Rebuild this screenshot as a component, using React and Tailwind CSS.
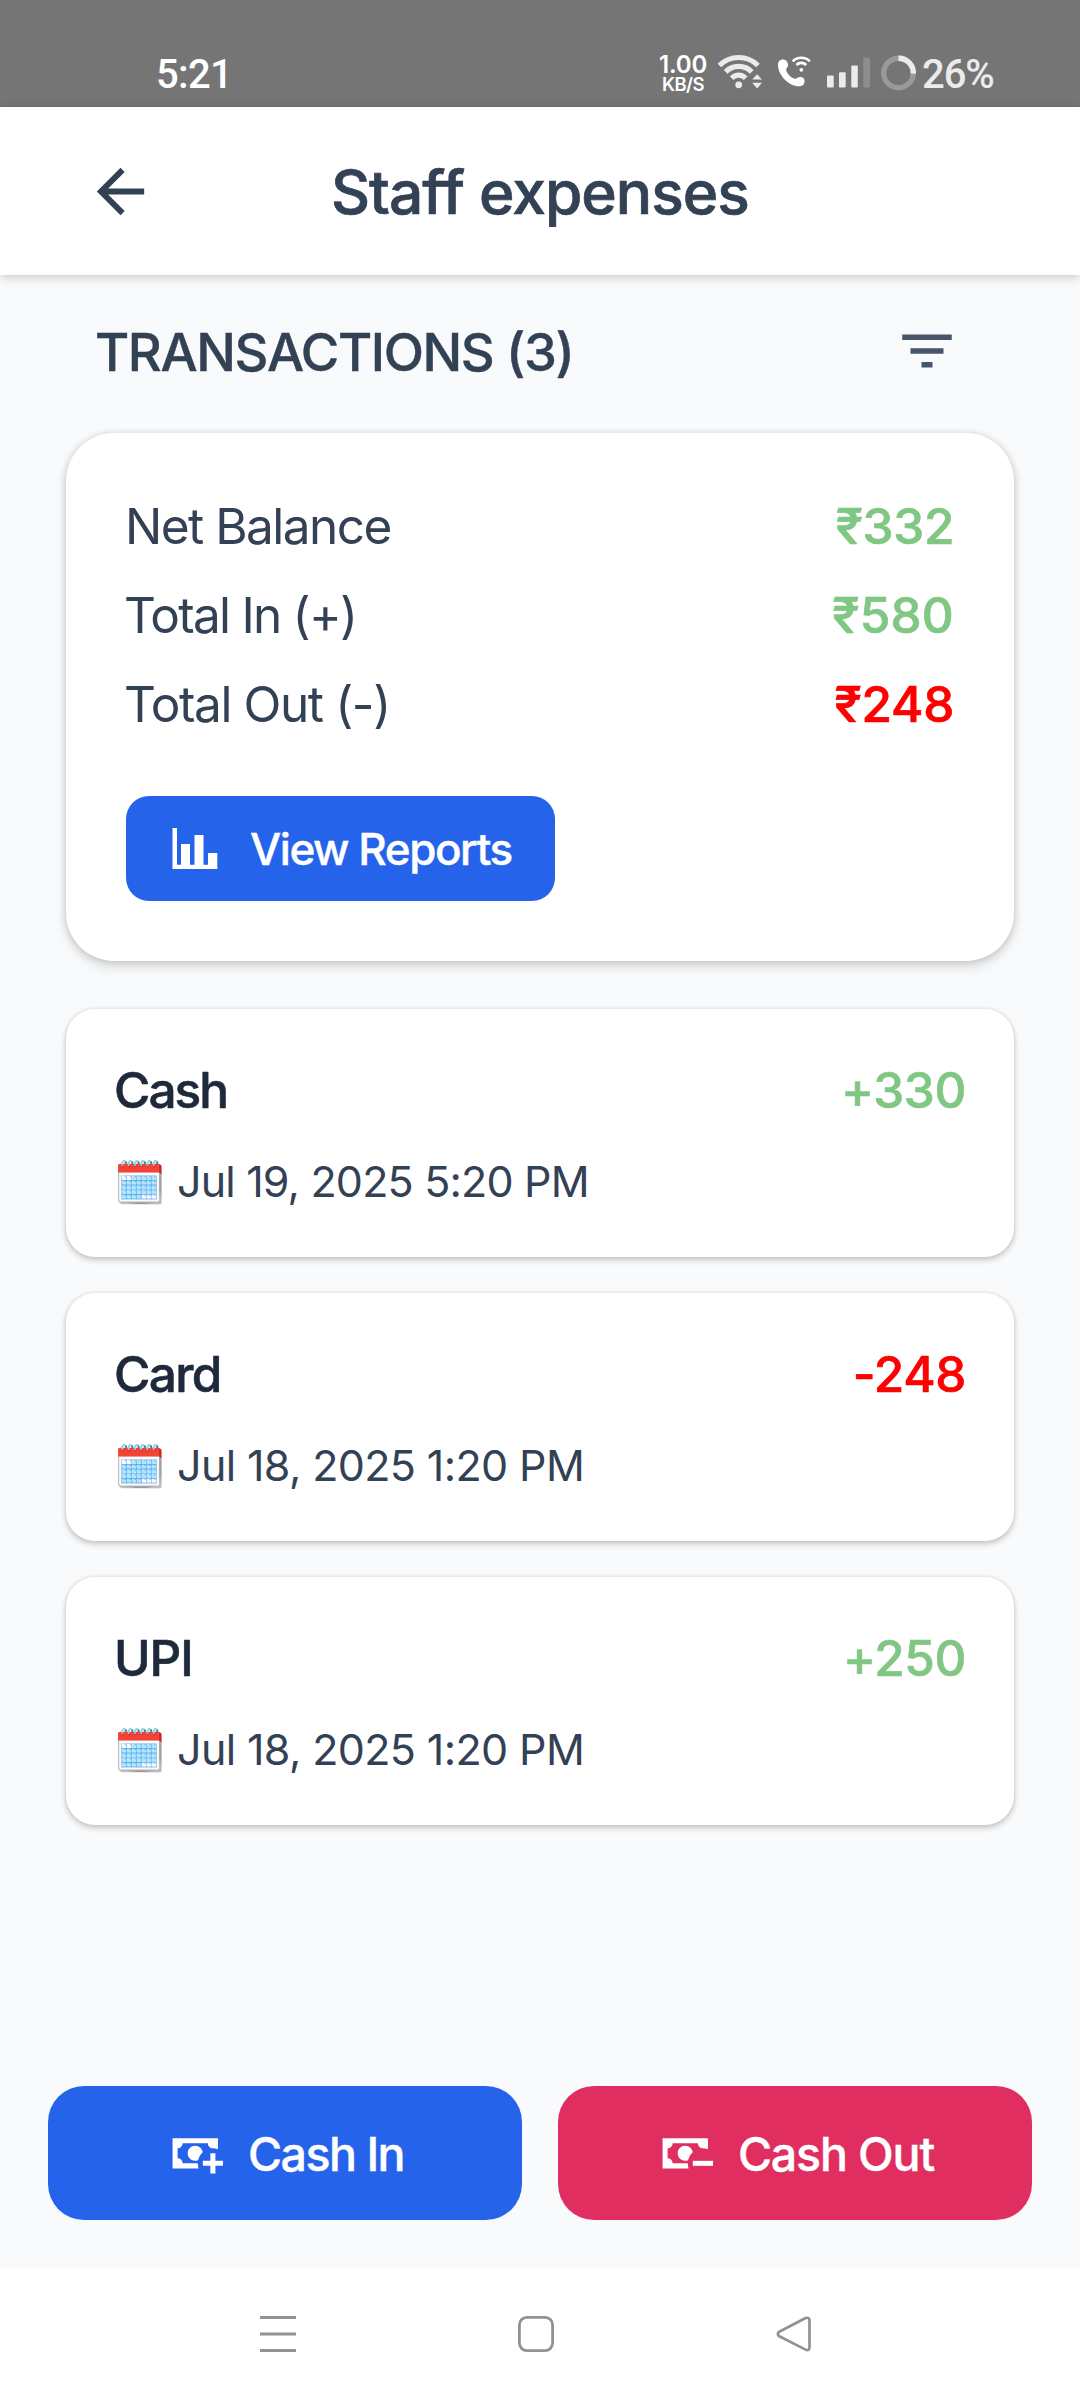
const transactions = [
  { name: 'Cash', tracking: 'tracking-[-1.9px]', amount: '+330', date: 'Jul 19, 2025 5:20 PM', dateTracking: 'tracking-[-0.82px]' },
  { name: 'Card', tracking: 'tracking-[-1.6px]', amount: '-248', date: 'Jul 18, 2025 1:20 PM', dateTracking: 'tracking-[-0.62px]' },
  { name: 'UPI', tracking: 'tracking-[-1.1px]', amount: '+250', date: 'Jul 18, 2025 1:20 PM', dateTracking: 'tracking-[-0.62px]' },
];

const totals = [
  { label: 'Net Balance', tracking: 'tracking-[-1.52px] -ml-[1px]', value: '₹332', color: 'text-[#81c784]', valueTracking: 'tracking-[-0.4px]' },
  { label: 'Total In (+)', tracking: 'tracking-[-1.75px] -ml-[2px]', value: '₹580', color: 'text-[#81c784]', valueTracking: 'tracking-[0.2px]' },
  { label: 'Total Out (-)', tracking: 'tracking-[-1.4px] -ml-[2px]', value: '₹248', color: 'text-[#ff0000]', valueTracking: 'tracking-[-0.3px]' },
];

function WifiIcon() {
  return (
    <svg width="48" height="48" viewBox="0 0 48 48" className="ml-[9px] shrink-0" fill="none" stroke="#ebebeb" strokeWidth="5.2">
      <path d="M3.4 14.5A27.3 27.3 0 0 1 42 14.5" />
      <path d="M9.6 20.9A18.4 18.4 0 0 1 35.8 20.9" />
      <path d="M15.7 27.2A9.7 9.7 0 0 1 29.7 27.2" />
      <circle cx="22.7" cy="33.8" r="3.4" fill="#ebebeb" stroke="none" />
      <path d="M36.2 28.5h9.8l-4.9-5.2zM36.2 31.8h9.8l-4.9 5.6z" fill="#ebebeb" stroke="none" />
    </svg>
  );
}

function WifiCallIcon() {
  return (
    <svg width="38" height="48" viewBox="0 0 38 48" className="ml-[12px] shrink-0" fill="none" stroke="#fff" strokeWidth="2.7">
      <path
        d="M2 13.5C2 10 4.4 8.5 7 8.5C10 8.5 12 11 12 13.8C12 16.8 9.5 17.4 10.4 20C11.8 23.6 15 26.4 18 27.6C20.5 28.6 21.2 25.6 24.8 26.1C27.8 26.6 28.9 28.4 28.5 31C28 34 26 35.4 23 35.3C13 35 2 25 2 13.5Z"
        fill="#fff"
        stroke="none"
      />
      <circle cx="25.3" cy="18.8" r="1.9" fill="#fff" stroke="none" />
      <path d="M16.7 10.4A12 12 0 0 1 33.9 10.4" />
      <path d="M20.4 14A6.9 6.9 0 0 1 30.2 14" />
    </svg>
  );
}

function SignalIcon() {
  return (
    <svg width="44" height="48" viewBox="0 0 44 48" className="ml-[13px] shrink-0" fill="#ebebeb">
      <rect x="0" y="24.5" width="6.7" height="12" rx="1" />
      <rect x="12" y="21.2" width="6.7" height="15.3" rx="1" />
      <rect x="24.3" y="14.5" width="6.5" height="22" rx="1" />
      <rect x="36.3" y="6.5" width="6.7" height="30" rx="1" fill="#8e8e8e" />
    </svg>
  );
}

function BatteryRing() {
  return (
    <svg width="36" height="48" viewBox="0 0 36 48" className="ml-[10px] shrink-0" fill="none" strokeWidth="5.4">
      <circle cx="17.5" cy="22" r="14.8" stroke="#999" />
      <path d="M17.5 7.2A14.8 14.8 0 0 1 32.3 22.6" stroke="#ebebeb" />
    </svg>
  );
}

function CashIcon({ plus }) {
  return (
    <svg width="60.5" height="60.5" viewBox="0 0 24 24" className="shrink-0" fill="#fff">
      <path d={plus ? 'M15 15V17H18V20H20V17H23V15H20V12H18V15Z' : 'M15 15V17H23V15Z'} />
      <path d="M14.97 11.61C14.85 10.28 13.59 8.97 12 9C10.3 9.03 9 10.3 9 12C9 13.7 10.3 14.94 12 15C12.38 15 12.77 14.92 13.14 14.77C13.41 13.67 13.86 12.63 14.97 11.61ZM13 16H7C7 14.9 6.11 14 5 14V10C6.11 10 7 9.11 7 8H17C17 9.11 17.9 10 19 10V10.06C19.67 10.06 20.34 10.18 21 10.4V6H3V18H13.32C13.1 17.33 13 16.66 13 16Z" />
    </svg>
  );
}

export default function App() {
  return (
    <div className="flex h-[2400px] w-[1080px] flex-col overflow-hidden bg-[#f8fafc] font-['Inter','Liberation_Sans',sans-serif] whitespace-nowrap text-[#334155]">
      <div className="flex h-[107px] shrink-0 items-center bg-[#757575] pt-[42px] pl-[156px] font-['Roboto',sans-serif] font-medium text-white">
        <span className="w-[503px] text-[40px] leading-[48px] tracking-[-0.7px]">5:21</span>
        <div className="flex w-[48px] flex-col items-center">
          <span className="font-['Inter',sans-serif] text-[24px] leading-[18px] font-semibold tracking-[-0.15px]">1.00</span>
          <span className="font-['Inter',sans-serif] text-[18.5px] leading-[20px] font-semibold tracking-[-0.6px]">KB/S</span>
        </div>
        <WifiIcon />
        <WifiCallIcon />
        <SignalIcon />
        <BatteryRing />
        <span className="ml-[5px] text-[40px] leading-[48px] font-medium tracking-[-1.1px] text-[#ebebeb]">26%</span>
      </div>

      <header className="relative z-10 flex h-[168px] shrink-0 items-center bg-white px-[85px] shadow-[0_2px_10px_rgba(0,0,0,0.2)]">
        <svg width="71" height="71" viewBox="0 0 24 24" className="shrink-0" fill="#334155">
          <path d="M20 11H7.83l5.59-5.59L12 4l-8 8 8 8 1.41-1.41L7.83 13H20v-2z" />
        </svg>
        <h1 className="flex-1 pt-[1px] text-center text-[60.5px] leading-[72px] font-medium tracking-[-1px] [-webkit-text-stroke:0.7px_currentColor]">Staff expenses</h1>
        <div className="w-[71px]" />
      </header>

      <main className="flex flex-1 flex-col px-[66px] pt-[43px]">
        <div className="flex h-[66px] items-center justify-between pr-[54.5px] pl-[29px]">
          <h2 className="pt-[2px] text-[52.5px] leading-[64px] font-medium tracking-[-1.4px] [-webkit-text-stroke:0.4px_currentColor]">TRANSACTIONS (3)</h2>
          <svg width="66" height="66" viewBox="0 0 24 24" className="shrink-0" fill="#475569">
            <path d="M10 18h4v-2h-4v2zM3 6v2h18V6H3zm3 7h12v-2H6v2z" />
          </svg>
        </div>

        <section className="mt-[49px] flex h-[528px] flex-col rounded-[48px] bg-white px-[60px] pt-[48px] shadow-[0_5px_12px_rgba(0,0,0,0.16),0_0_7px_rgba(0,0,0,0.12)]">
          {totals.map((row) => (
            <div key={row.label} className="flex h-[89px] items-center justify-between text-[49.5px] leading-[60px]">
              <span className={row.tracking}>{row.label}</span>
              <span className={`font-medium [-webkit-text-stroke:0.7px_currentColor] ${row.valueTracking} ${row.color}`}>{row.value}</span>
            </div>
          ))}
          <button className="mt-[48px] flex h-[105px] w-[429px] shrink-0 items-center rounded-[23px] bg-[#2563eb] pl-[46px] text-white">
            <svg width="46" height="42" viewBox="0 0 46 42" fill="#fff">
              <path d="M0.5 0H5v36.7h4V16h9v20.7h4.5V7h9v29.7H36V25h9.3v16H0.5z" />
            </svg>
            <span className="ml-[32px] text-[44px] leading-[54px] font-medium tracking-[-1.45px] [-webkit-text-stroke:0.4px_currentColor]">View Reports</span>
          </button>
        </section>

        <div className="mt-[48px] flex flex-col gap-[36px]">
          {transactions.map((t) => (
            <article key={t.name} className="h-[248px] rounded-[29px] bg-white px-[48px] pt-[48px] shadow-[0_3px_6px_rgba(0,0,0,0.2),0_0_4px_rgba(0,0,0,0.1)]">
              <div className="flex h-[66px] items-center justify-between text-[49.5px] leading-[60px] font-medium [-webkit-text-stroke:0.6px_currentColor]">
                <span className={`text-[#1e293b] ${t.tracking}`}>{t.name}</span>
                <span className={`tracking-[-0.4px] ${t.amount.startsWith('-') ? 'text-[#ff0000]' : 'text-[#81c784]'}`}>{t.amount}</span>
              </div>
              <div className="mt-[28px] flex h-[60px] items-center text-[43px] leading-[52px]">
                <span className="w-[63px] shrink-0 pt-[1px] text-[41.5px]">🗓️</span>
                <span className={t.dateTracking}>{t.date}</span>
              </div>
            </article>
          ))}
        </div>
      </main>

      <footer className="flex shrink-0 gap-[36px] px-[48px] pb-[48px]">
        <button className="flex h-[134px] flex-1 items-center justify-center gap-[22.5px] rounded-[36px] bg-[#2563eb] pr-[1px] text-white">
          <CashIcon plus />
          <span className="pt-[1px] text-[46.5px] leading-[56px] font-medium tracking-[-1.5px] [-webkit-text-stroke:0.4px_currentColor]">Cash In</span>
        </button>
        <button className="flex h-[134px] flex-1 items-center justify-center gap-[22.5px] rounded-[36px] bg-[#e02e60] pr-[1px] text-white">
          <CashIcon />
          <span className="pt-[1px] text-[46.5px] leading-[56px] font-medium tracking-[-1.15px] [-webkit-text-stroke:0.4px_currentColor]">Cash Out</span>
        </button>
      </footer>

      <nav className="flex h-[132px] shrink-0 items-center gap-[222px] bg-white pl-[260px]">
        <svg width="36" height="36" viewBox="0 0 36 36" fill="none" stroke="#929292" strokeWidth="3">
          <path d="M0 1.5H36M0 18H36M0 34.5H36" />
        </svg>
        <svg width="36" height="36" viewBox="0 0 36 36" fill="none" stroke="#929292" strokeWidth="2.8">
          <rect x="1.4" y="1.4" width="33.2" height="33.2" rx="7.5" />
        </svg>
        <svg width="36" height="36" viewBox="0 0 36 36" fill="none" stroke="#929292" strokeWidth="2.7">
          <path d="M2.8 16L29.6 2Q33.3 0.9 33.5 4.4V31.2Q33.3 35.4 29.6 33.6L2.8 20Q1 18 2.8 16Z" strokeLinejoin="round" />
        </svg>
      </nav>
    </div>
  );
}
